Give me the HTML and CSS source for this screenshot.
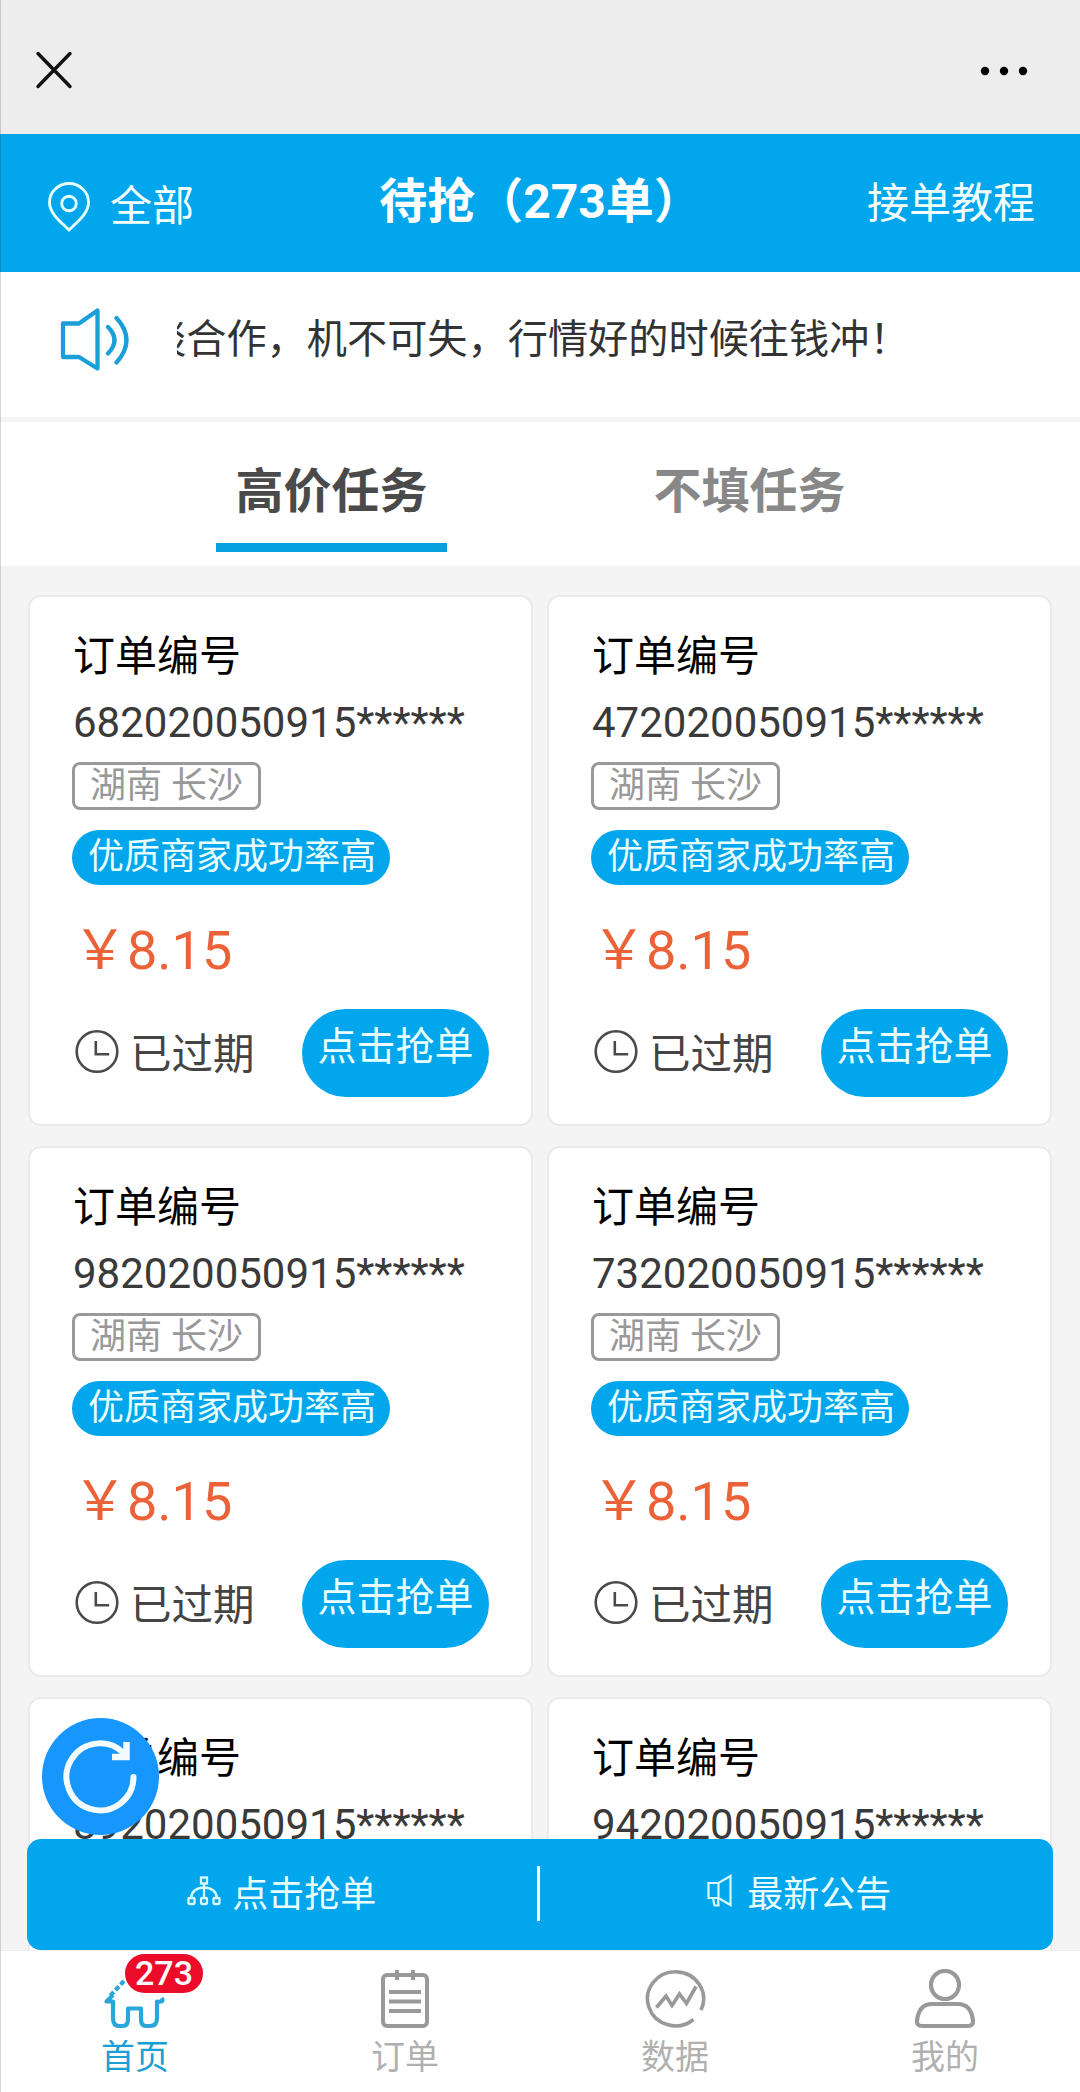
FILE: index.html
```html
<!DOCTYPE html>
<html lang="zh-CN">
<head>
<meta charset="utf-8">
<title>待抢</title>
<link rel="stylesheet" href="styles.css">
</head>
<body>
<svg width="0" height="0" class="defs">
  <symbol id="clock" viewBox="0 0 46 46"><g fill="none" stroke="currentColor" stroke-width="2.6"><ellipse cx="23" cy="22.5" rx="20.3" ry="20.3"/><path d="M21.8 12v13.2h13.4"/></g></symbol>
</svg>
<div class="app">
  <header class="shell">
    <svg width="44" height="44" viewBox="0 0 44 44"><path d="M5 4.500L37 37.500M37 4.500L5 37.500" fill="none" stroke="#111" stroke-width="3.400" stroke-linecap="round"/></svg>
    <svg width="50" height="12" viewBox="0 0 50 12"><g fill="#000"><circle cx="6" cy="6" r="4.200"/><circle cx="25" cy="6" r="4.200"/><circle cx="44" cy="6" r="4.200"/></g></svg>
  </header>

  <div class="titlebar">
    <div class="place">
      <svg width="46" height="52" viewBox="0 0 46 52"><g fill="none" stroke="#e6ffff" stroke-width="2.900"><path d="M23 49C16 42 3.500 33 3.500 21.500a19.500 19 0 0 1 39 0C42.500 33 30 42 23 49Z"/><circle cx="23" cy="22.500" r="7.300"/></g></svg>
      <span>全部</span>
    </div>
    <h1>待抢（273单）</h1>
    <span class="guide">接单教程</span>
  </div>

  <div class="notice">
    <svg width="76" height="68" viewBox="0 0 76 68"><g fill="none" stroke="#1a9fd8" stroke-width="4.300" stroke-linejoin="round" stroke-linecap="round"><path d="M6 18.500H22L40.500 5.500V63.500L22 52H6Z"/><path d="M51 22q13 13 0 26.500M59.500 13q20 22 0 44.500"/></g></svg>
    <div class="marquee"><span>谈合作，机不可失，行情好的时候往钱冲！</span></div>
  </div>

  <div class="tabs"><span class="tab on">高价任务</span><span class="tab">不填任务</span></div>

  <main class="orders">
    <article class="card"><h2>订单编号</h2><p class="num">682020050915******</p><span class="city">湖南 长沙</span><span class="perk">优质商家成功率高</span><p class="price">￥8.15</p><div class="foot"><svg class="clock"><use href="#clock"/></svg><span class="state">已过期</span><span class="grab">点击抢单</span></div></article>
    <article class="card"><h2>订单编号</h2><p class="num">472020050915******</p><span class="city">湖南 长沙</span><span class="perk">优质商家成功率高</span><p class="price">￥8.15</p><div class="foot"><svg class="clock"><use href="#clock"/></svg><span class="state">已过期</span><span class="grab">点击抢单</span></div></article>
    <article class="card"><h2>订单编号</h2><p class="num">982020050915******</p><span class="city">湖南 长沙</span><span class="perk">优质商家成功率高</span><p class="price">￥8.15</p><div class="foot"><svg class="clock"><use href="#clock"/></svg><span class="state">已过期</span><span class="grab">点击抢单</span></div></article>
    <article class="card"><h2>订单编号</h2><p class="num">732020050915******</p><span class="city">湖南 长沙</span><span class="perk">优质商家成功率高</span><p class="price">￥8.15</p><div class="foot"><svg class="clock"><use href="#clock"/></svg><span class="state">已过期</span><span class="grab">点击抢单</span></div></article>
    <article class="card"><h2>订单编号</h2><p class="num">892020050915******</p></article>
    <article class="card"><h2>订单编号</h2><p class="num">942020050915******</p></article>
  </main>

  <div class="refresh">
    <svg width="117" height="117" viewBox="0 0 117 117"><g fill="none" stroke="#f4fbff" stroke-width="6"><path d="M91.500 59A33.500 33.500 0 1 1 82 35.500" stroke-linecap="round"/><path d="M84.500 24V39H70" stroke-width="6.500"/></g></svg>
  </div>

  <div class="actions">
    <div class="action">
      <svg width="36" height="32" viewBox="0 0 36 32"><g fill="none" stroke="#d8fbff" stroke-width="2.300"><rect x="15" y="2.500" width="6" height="6"/><path d="M18 8.500V24M5 23q1-10 13-10.500M31 23q-1-10-13-10.500"/><rect x="2.500" y="23" width="6" height="6" rx="1"/><rect x="15" y="23" width="6" height="6" rx="1"/><rect x="27.500" y="23" width="6" height="6" rx="1"/></g></svg>
      <span>点击抢单</span>
    </div>
    <i class="rule"></i>
    <div class="action news">
      <svg width="28" height="34" viewBox="0 0 28 34"><g fill="none" stroke="#d8fbff" stroke-width="2.200"><path d="M2.500 9H12.500L24.500 2V31L12.500 24H2.500ZM12.500 9V24M7 24l1.500 7.500h4l-.5-7.500"/></g></svg>
      <span>最新公告</span>
    </div>
  </div>

  <nav class="nav">
    <a class="item on">
      <svg width="64" height="60" viewBox="0 0 64 60"><g fill="none" stroke="#2ba6da" stroke-width="4.200" stroke-linejoin="round"><path d="M21 12L6 28" stroke-dasharray="5 2.500"/><path d="M10 26L3.500 32.500H10V49q0 8 6 8H20q5 0 5-7V39.500H38V50q0 7 5 7h4q7 0 7-8V32.500q8 1 4.500-3.500"/></g></svg>
      <b class="badge">273</b><span>首页</span>
    </a>
    <a class="item">
      <svg width="64" height="60" viewBox="0 0 64 60"><g fill="none" stroke="#999" stroke-width="4"><rect x="10" y="6" width="44" height="51" rx="4"/><path d="M24 1V11M40 1V11M16 23H48M16 32.500H48M16 42H48"/></g></svg>
      <span>订单</span>
    </a>
    <a class="item">
      <svg width="64" height="60" viewBox="0 0 64 60"><g fill="none" stroke="#999" stroke-width="3.600"><path d="M58 41A28 27 0 1 0 50.500 50.500"/><path d="M13.500 38.500L23 27L29 36.500L36.500 25L43.500 34.500L53 17.500"/></g></svg>
      <span>数据</span>
    </a>
    <a class="item">
      <svg width="64" height="60" viewBox="0 0 64 60"><g fill="none" stroke="#999" stroke-width="4.200"><circle cx="32" cy="16" r="14"/><path d="M19 35H45Q58 35 60 51.500Q60.500 57 55 57H9Q3.500 57 4 51.500Q6 35 19 35Z"/></g></svg>
      <span>我的</span>
    </a>
  </nav>
</div>
</body>
</html>
```
FILE: styles.css
```css
* { box-sizing: border-box; margin: 0; padding: 0; }
body { font-family: Roboto, "Noto Sans CJK SC", sans-serif; font-weight: 400; background: #f4f4f4; }
svg { display: block; flex: none; }
.defs { position: absolute; }
.app { position: relative; width: 1080px; height: 2092px; overflow: hidden; display: flex; flex-direction: column; background: #f4f4f4; }
.app::after { content: ""; position: absolute; left: 0; top: 0; width: 1px; height: 100%; background: rgba(0, 0, 0, .15); }

.shell { flex: none; height: 134px; background: #ededed; display: flex; justify-content: space-between; align-items: center; padding: 7px 51px 0 33px; }

.titlebar { flex: none; height: 138px; background: #02a6ec; color: #f4ffff; display: grid; grid-template-columns: 1fr auto 1fr; align-items: center; padding: 0 45px 0 46px; font-size: 42px; line-height: 60px; }
.place { display: flex; align-items: center; gap: 18px; padding-top: 7px; }
h1 { font-size: 48px; font-weight: 700; line-height: 60px; color: #fff; padding-bottom: 3px; }
.guide { text-align: right; padding-top: 1px; }

.notice { flex: none; height: 145px; background: #fff; display: flex; align-items: center; padding: 0 177px 11px 57px; gap: 44px; }
.marquee { flex: 1; overflow: hidden; white-space: nowrap; font-size: 40.2px; line-height: 60px; color: #333; padding-top: 2px; }
.marquee span { display: block; margin-left: -31px; }

.tabs { flex: none; height: 144px; margin-top: 5px; background: #fff; display: flex; justify-content: space-between; padding: 0 215px 0 216px; }
.tab { width: 231px; height: 130px; text-align: center; font-size: 48px; font-weight: 700; line-height: 140px; color: #888; }
.tab.on { color: #4a4a4a; border-bottom: 9px solid #06a0df; }

.orders { flex: none; display: grid; grid-template-columns: 505px 505px; gap: 20px 14px; padding: 29px 28px 0; }
.card { height: 531px; background: #fff; border: 2px solid #eaeaea; border-radius: 13px; padding: 29.500px 42px 0; display: flex; flex-direction: column; align-items: flex-start; }
h2 { font-size: 42px; font-weight: 400; line-height: 60px; color: #000; padding-left: 1px; }
.num { font-size: 42px; line-height: 60px; margin-top: 6px; padding-left: 1px; color: #3a3a3a; }
.city { height: 48px; margin-top: 9px; border: 3px solid #999; border-radius: 8px; padding: 0 15px; font-size: 36px; line-height: 42px; color: #999; }
.perk { height: 55px; margin-top: 20px; border-radius: 28px; padding: 0 14px 0 16px; font-size: 36px; line-height: 54px; color: #eaffff; background: #02a6ec; }
.price { font-size: 54px; line-height: 70px; margin-top: 31px; padding-left: 1px; color: #ec6238; }
.foot { display: flex; align-items: flex-start; margin-top: 23.500px; }
.clock { width: 46px; height: 46px; margin: 20px 0 0 2px; color: #4a4a4a; }
.state { width: 126px; margin: 16px 0 0 10px; font-size: 41.5px; line-height: 60px; color: #444; white-space: nowrap; }
.grab { width: 187px; height: 88px; margin-left: 46px; border-radius: 44px; text-align: center; font-size: 39px; line-height: 76px; color: #eaffff; background: #02a6ec; }

.refresh { position: absolute; left: 42px; top: 1718px; border-radius: 50%; background: #1797fd; }

.actions { position: absolute; left: 27px; top: 1839px; width: 1026px; height: 111px; border-radius: 14px; background: #02a6ec; color: #eaffff; display: flex; align-items: center; justify-content: center; }
.action { flex: 1; display: flex; justify-content: center; align-items: center; gap: 10px; font-size: 36px; line-height: 60px; }
.action:first-child { padding-right: 1px; }
.action svg { margin-bottom: 8px; }
.news { gap: 13px; padding-left: 3px; }
.rule { width: 3px; height: 55px; margin: 0 2px 2px 0; background: #fff; }

.nav { position: absolute; left: 0; bottom: 0; width: 1080px; height: 142px; background: #fff; border-top: 1px solid #eee; display: grid; grid-template-columns: repeat(4, 1fr); }
.item { position: relative; display: flex; flex-direction: column; align-items: center; padding-top: 18px; font-size: 34px; color: #b0b0b0; }
.item span { line-height: 50px; margin-top: 3px; }
.item.on { color: #1a9fd4; }
.badge { position: absolute; left: 125px; top: 3px; width: 78px; height: 39px; border-radius: 20px; background: #ec0c2a; color: #fff; font-size: 34px; font-weight: 500; line-height: 39px; text-align: center; }
```
